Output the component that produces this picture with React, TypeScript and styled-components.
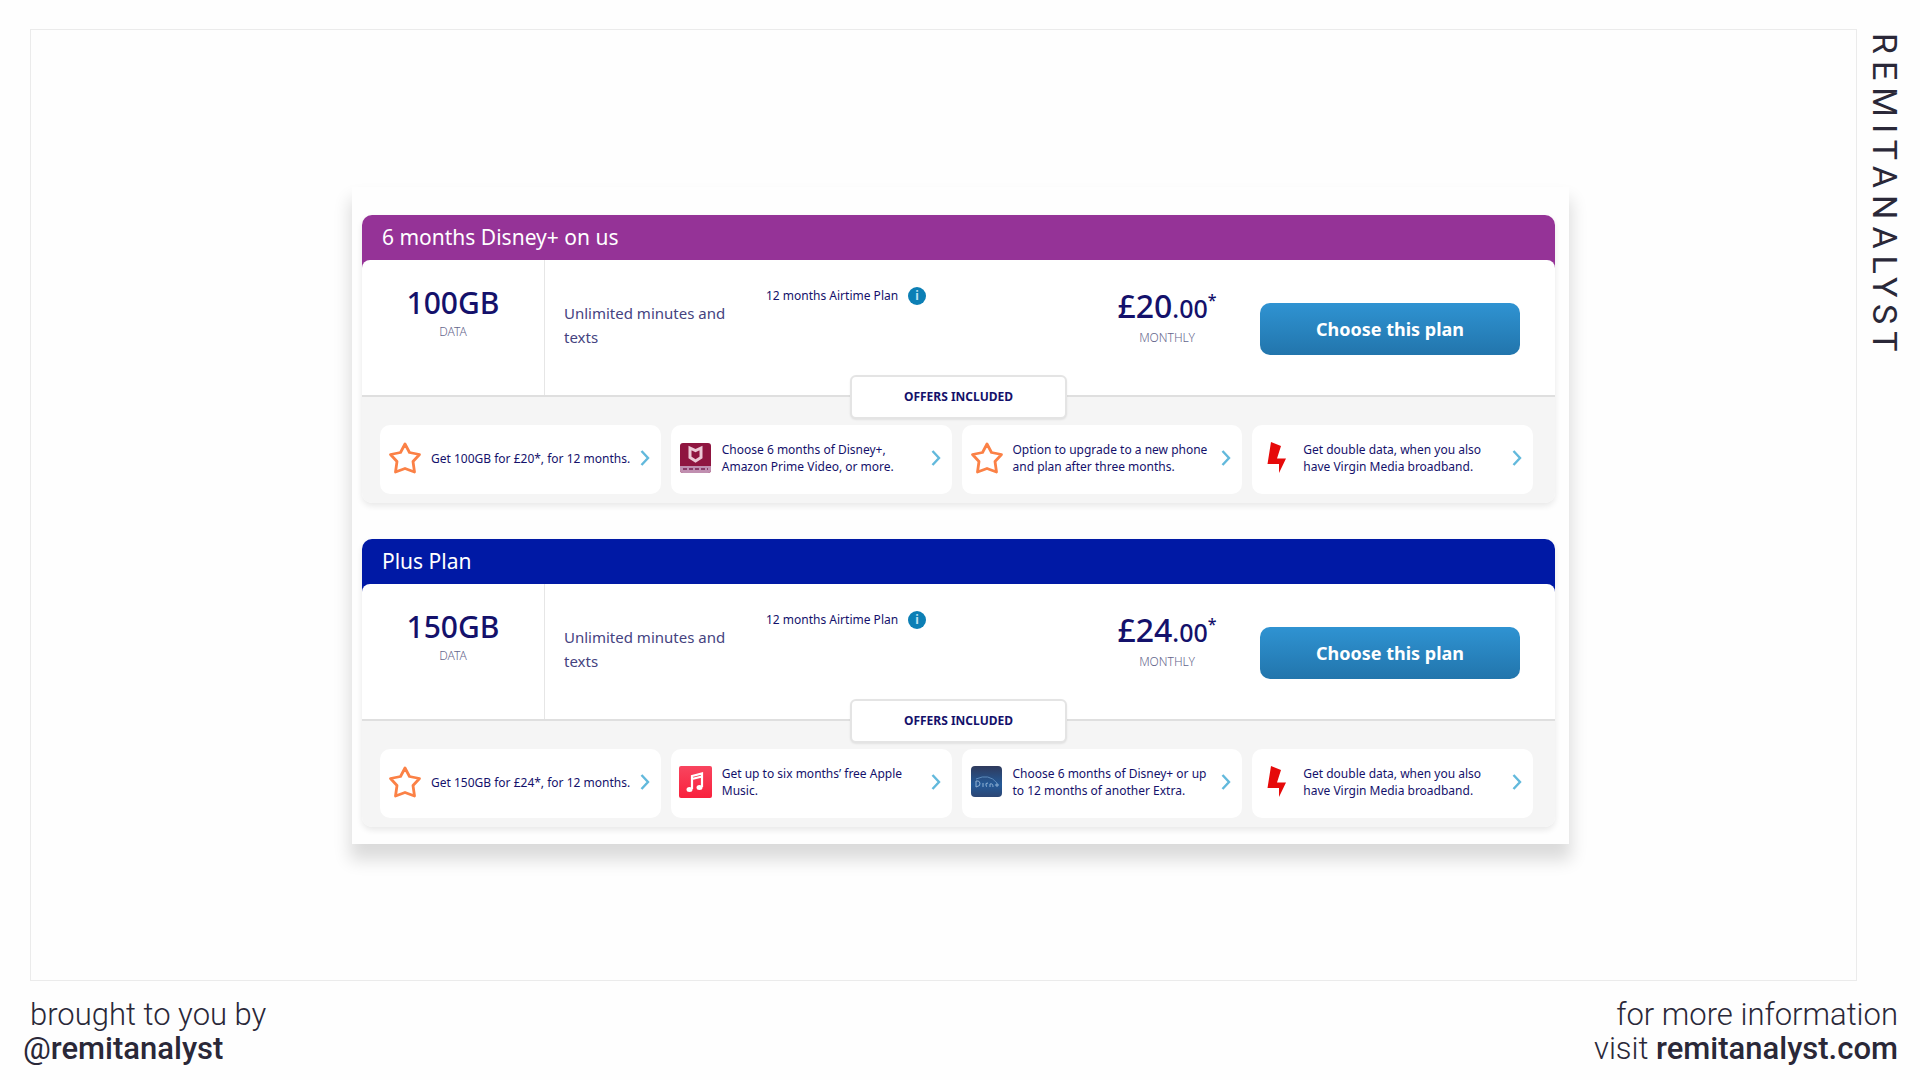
import React from "react";
import styled, { createGlobalStyle } from "styled-components";

const NAVY = "#14116b";

const GlobalStyle = createGlobalStyle`
  *, *::before, *::after { box-sizing: border-box; }
  body { margin: 0; background: #fefefe; font-family: "Noto Sans", "Open Sans", sans-serif; }
  h2, p, ul { margin: 0; padding: 0; }
`;

const Page = styled.div`
  min-height: 100vh;
  display: flex;
  flex-direction: column;
  padding: 29px 22px 14px 30px;
`;

const Stage = styled.div`
  flex: 1;
  display: flex;
`;

const Frame = styled.main`
  flex: 1;
  display: flex;
  justify-content: center;
  align-items: center;
  padding-top: 20px;
  padding-left: 34px;
  border: 1px solid #ebebeb;
`;

const Brand = styled.div`
  width: 41px;
  padding-top: 4px;
  writing-mode: vertical-rl;
  font-family: Roboto, sans-serif;
  font-size: 34px;
  line-height: 26px;
  letter-spacing: 7px;
  color: #2a2838;
`;

const Panel = styled.section`
  width: 68%;
  max-width: 1217px;
  padding: 28px 14px 17px 10px;
  display: flex;
  flex-direction: column;
  gap: 36px;
  background: #fefefe;
  box-shadow: 0 14px 16px 2px rgba(0, 0, 0, 0.14);
`;

const Plan = styled.article<{ $tone: string }>`
  border-radius: 10px;
  background: linear-gradient(${(p) => p.$tone} 80px, #f5f5f5 80px);
  box-shadow: 0 3px 6px rgba(0, 0, 0, 0.09);
`;

const PlanTitle = styled.h2`
  padding: 0 20px;
  font-size: 21px;
  font-weight: 400;
  line-height: 45px;
  color: #fff;
`;

const Details = styled.div`
  height: 137px;
  display: flex;
  border-bottom: 2px solid #dfdfdf;
  border-radius: 8px 8px 0 0;
  background: #fff;
  color: ${NAVY};
`;

const DataCell = styled.div`
  width: 183px;
  padding-top: 22px;
  border-right: 1px solid #e6e6e6;
  text-align: center;
`;

const Amount = styled.p<{ $large?: boolean }>`
  font-size: ${(p) => (p.$large ? 32 : 30)}px;
  font-weight: 500;
  line-height: ${(p) => (p.$large ? 44 : 42)}px;
`;

const Cents = styled.span`
  font-size: 25px;
`;

const Star = styled.sup`
  font-size: 16px;
  line-height: 0;
`;

const Caption = styled.p`
  font-size: 12px;
  font-weight: 300;
  line-height: 16px;
  color: #64668c;
`;

const Minutes = styled.p`
  width: 202px;
  padding: 41px 16px 0 19px;
  font-size: 15px;
  line-height: 24px;
  color: #45437f;
`;

const Term = styled.div`
  flex: 1;
  display: flex;
  align-items: center;
  align-self: flex-start;
  gap: 10px;
  padding-top: 26px;
  padding-left: 19px;
  font-size: 12px;
  line-height: 20px;
`;

const InfoButton = styled.button`
  width: 18px;
  height: 18px;
  padding: 0;
  border: 0;
  border-radius: 50%;
  background: #0c7fb5;
  color: #bfe3f2;
  font: 700 12px/18px "Noto Sans", sans-serif;
`;

const PriceCell = styled.div`
  width: 116px;
  padding-top: 24px;
  text-align: center;
`;

const ChooseButton = styled.button`
  width: 260px;
  height: 52px;
  margin: 43px 35px 0 35px;
  border: 0;
  border-radius: 10px;
  background: linear-gradient(#2f93d2, #2275ac);
  color: #fff;
  font: 700 18px/24px "Noto Sans", sans-serif;
`;

const Offers = styled.div`
  padding: 0 18px 9px;
  display: flex;
  flex-direction: column;
  align-items: center;
`;

const OffersLabel = styled.p`
  width: 217px;
  margin-top: -22px;
  margin-bottom: 6px;
  border: 2px solid #e4e4e4;
  border-radius: 6px;
  background: #fff;
  box-shadow: 0 1px 2px rgba(0, 0, 0, 0.08);
  color: ${NAVY};
  font-size: 12px;
  font-weight: 700;
  line-height: 40px;
  text-align: center;
`;

const OfferList = styled.ul`
  align-self: stretch;
  display: grid;
  grid-template-columns: repeat(4, 1fr);
  gap: 10px;
  margin-right: 4px;
  list-style: none;
`;

const OfferLink = styled.a`
  height: 69px;
  padding: 0 11px 2px 8px;
  display: flex;
  align-items: center;
  gap: 9px;
  border-radius: 10px;
  background: #fff;
  color: ${NAVY};
  font-size: 12px;
  line-height: 17px;
  text-decoration: none;
  svg { flex: none; }
`;

const OfferText = styled.span`
  flex: 1;
  white-space: pre;
`;

const Footer = styled.footer`
  display: flex;
  justify-content: space-between;
  margin-left: -7px;
  padding-top: 17px;
  font-family: Roboto, sans-serif;
  font-size: 31px;
  font-weight: 300;
  line-height: 34px;
  color: #2a2838;
`;

const Credit = styled.p<{ $end?: boolean }>`
  text-align: ${(p) => (p.$end ? "right" : "left")};
  text-indent: ${(p) => (p.$end ? 0 : 7)}px;
`;

const Handle = styled.a`
  color: inherit;
  font-weight: 500;
  text-decoration: none;
`;

const AtSign = styled.span`
  font-weight: 400;
`;

type IconName = "star" | "shield" | "music" | "disney" | "bolt";

function OfferIcon({ name }: { name: IconName }) {
  const common = { width: 34, height: 34, viewBox: "0 0 34 34", "aria-hidden": true };
  if (name === "star")
    return (
      <svg {...common}>
        <path d="M17 3L21.500 11.500L31.500 13.500L25 20.500L26.500 31L17 27.500L7.500 31L9 20.500L2.500 13.500L12.500 11.500Z" fill="none" stroke="#fb8146" strokeWidth="2.800" strokeLinejoin="round" />
      </svg>
    );
  if (name === "bolt")
    return (
      <svg {...common}>
        <path d="M11 1L21 5L17 17.500H26L19 32V23H7.500Z" fill="#e60a0a" />
      </svg>
    );
  if (name === "music")
    return (
      <svg {...common}>
        <defs>
          <linearGradient id="music" x2="0" y2="1">
            <stop stopColor="#f8455f" />
            <stop offset="1" stopColor="#f9213d" />
          </linearGradient>
        </defs>
        <rect x="0" y="1" width="33" height="32" rx="2" fill="url(#music)" />
        <path d="M13 24V11L23 8.500V22M13 14L23 11.500" fill="none" stroke="#fff" strokeWidth="2.200" />
        <ellipse cx="10.500" cy="24.500" rx="3" ry="2.500" fill="#fff" />
        <ellipse cx="20.500" cy="22.500" rx="3" ry="2.500" fill="#fff" />
      </svg>
    );
  if (name === "disney")
    return (
      <svg {...common}>
        <defs>
          <linearGradient id="disney" x2="0" y2="1">
            <stop stopColor="#2f3a5c" />
            <stop offset="0.600" stopColor="#245a98" />
            <stop offset="1" stopColor="#2c4674" />
          </linearGradient>
        </defs>
        <rect x="1" y="1" width="31" height="31" rx="4" fill="url(#disney)" />
        <path d="M6 14Q19 8 27 18" fill="none" stroke="#5c8abb" />
        <path d="M6 16v6q5-1 4-4t-4-2M13 18v4M18 18q-3 0-2 2t0 2M20 22v-3q3-1 3 3M25 20h4M27 18v4" fill="none" stroke="#8fb0d2" />
      </svg>
    );
  return (
    <svg {...common}>
      <rect x="1" y="2" width="31" height="30" rx="3" fill="#8f1540" />
      <path d="M1 25H32V29Q32 32 29 32H4Q1 32 1 29Z" fill="#c08fb0" />
      <path d="M4 28H29" stroke="#8a3a68" strokeWidth="2" strokeDasharray="4 2" />
      <path d="M11 7L16.500 9.500L22 7V16.500L16.500 20L11 16.500Z" fill="none" stroke="#ecc9d6" strokeWidth="3" />
    </svg>
  );
}

function Chevron() {
  return (
    <svg width="10" height="18" viewBox="0 0 10 18" aria-hidden="true">
      <path d="M1.500 2L8 9L1.500 16" fill="none" stroke="#62b9dc" strokeWidth="2.400" />
    </svg>
  );
}

interface PlanData {
  title: string;
  tone: string;
  data: string;
  price: string;
  offers: { icon: IconName; text: string }[];
}

const broadband = { icon: "bolt" as const, text: "Get double data, when you also\nhave Virgin Media broadband." };

const plans: PlanData[] = [
  {
    title: "6 months Disney+ on us",
    tone: "#953397",
    data: "100GB",
    price: "£20",
    offers: [
      { icon: "star", text: "Get 100GB for £20*, for 12 months." },
      { icon: "shield", text: "Choose 6 months of Disney+,\nAmazon Prime Video, or more." },
      { icon: "star", text: "Option to upgrade to a new phone\nand plan after three months." },
      broadband,
    ],
  },
  {
    title: "Plus Plan",
    tone: "#0019a5",
    data: "150GB",
    price: "£24",
    offers: [
      { icon: "star", text: "Get 150GB for £24*, for 12 months." },
      { icon: "music", text: "Get up to six months’ free Apple\nMusic." },
      { icon: "disney", text: "Choose 6 months of Disney+ or up\nto 12 months of another Extra." },
      broadband,
    ],
  },
];

function PlanCard({ plan }: { plan: PlanData }) {
  return (
    <Plan $tone={plan.tone}>
      <PlanTitle>{plan.title}</PlanTitle>
      <Details>
        <DataCell>
          <Amount>{plan.data}</Amount>
          <Caption>DATA</Caption>
        </DataCell>
        <Minutes>Unlimited minutes and texts</Minutes>
        <Term>
          12 months Airtime Plan
          <InfoButton aria-label="About the Airtime Plan">i</InfoButton>
        </Term>
        <PriceCell>
          <Amount $large>
            {plan.price}
            <Cents>.00</Cents>
            <Star>*</Star>
          </Amount>
          <Caption>MONTHLY</Caption>
        </PriceCell>
        <ChooseButton>Choose this plan</ChooseButton>
      </Details>
      <Offers>
        <OffersLabel>OFFERS INCLUDED</OffersLabel>
        <OfferList>
          {plan.offers.map((offer) => (
            <li key={offer.text}>
              <OfferLink href="#">
                <OfferIcon name={offer.icon} />
                <OfferText>{offer.text}</OfferText>
                <Chevron />
              </OfferLink>
            </li>
          ))}
        </OfferList>
      </Offers>
    </Plan>
  );
}

export default function App() {
  return (
    <>
      <GlobalStyle />
      <Page>
        <Stage>
          <Frame>
            <Panel>
              {plans.map((plan) => (
                <PlanCard key={plan.title} plan={plan} />
              ))}
            </Panel>
          </Frame>
          <Brand>REMITANALYST</Brand>
        </Stage>
        <Footer>
          <Credit>
            brought to you by
            <br />
            <Handle href="#">
              <AtSign>@</AtSign>remitanalyst
            </Handle>
          </Credit>
          <Credit $end>
            for more information
            <br />
            visit <Handle href="#">remitanalyst.com</Handle>
          </Credit>
        </Footer>
      </Page>
    </>
  );
}
